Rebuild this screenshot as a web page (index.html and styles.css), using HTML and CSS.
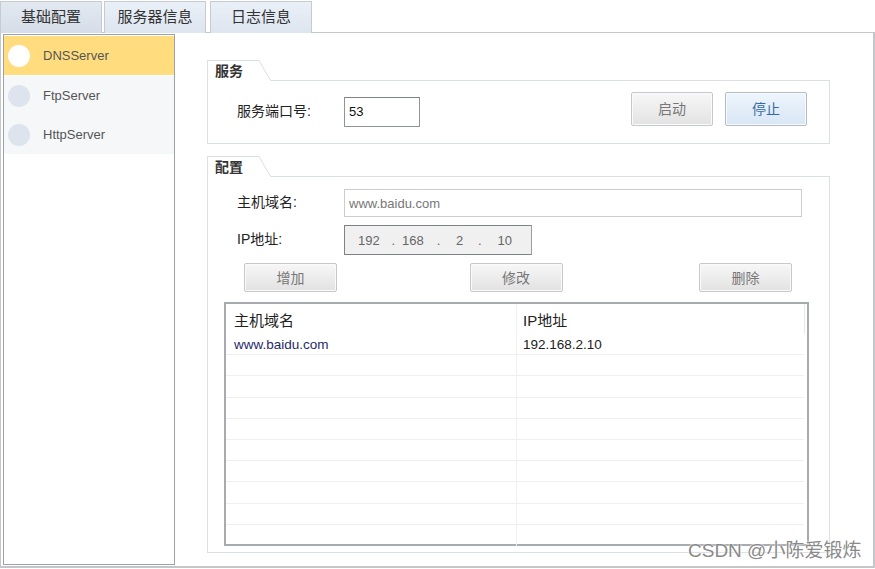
FILE: index.html
```html
<!DOCTYPE html>
<html lang="zh">
<head>
<meta charset="utf-8">
<title>服务器信息</title>
<link rel="stylesheet" href="styles.css">
</head>
<body>
<div class="app">
  <div class="tabs">
    <div class="tab tab-active">基础配置</div>
    <div class="tab">服务器信息</div>
    <div class="tab">日志信息</div>
  </div>
  <div class="frame">
    <div class="sidebar">
      <div class="item item-sel"><span class="dot"></span><span class="item-text">DNSServer</span></div>
      <div class="item"><span class="dot"></span><span class="item-text">FtpServer</span></div>
      <div class="item"><span class="dot"></span><span class="item-text">HttpServer</span></div>
    </div>
    <div class="content">
      <div class="group">
        <div class="ghead">
          <div class="glabel">服务</div>
          <svg class="gslant" width="16" height="21" viewBox="0 0 16 21"><polygon points="0,0 4,0 16,21 0,21" fill="#fff"/><polyline points="0,0.5 4,0.5 15.5,20.5" fill="none" stroke="#dcdfe3" stroke-width="1"/></svg>
        </div>
        <div class="gbox gbox-service">
          <span class="label">服务端口号:</span>
          <div class="input input-port">53</div>
          <div class="spacer"></div>
          <div class="btn btn-start">启动</div>
          <div class="btn btn-stop">停止</div>
        </div>
      </div>
      <div class="group group-config">
        <div class="ghead">
          <div class="glabel">配置</div>
          <svg class="gslant" width="16" height="21" viewBox="0 0 16 21"><polygon points="0,0 4,0 16,21 0,21" fill="#fff"/><polyline points="0,0.5 4,0.5 15.5,20.5" fill="none" stroke="#dcdfe3" stroke-width="1"/></svg>
        </div>
        <div class="gbox gbox-config">
          <div class="row row-host">
            <span class="label">主机域名:</span>
            <div class="input input-host">www.baidu.com</div>
          </div>
          <div class="row row-ip">
            <span class="label">IP地址:</span>
            <div class="ipbox">
              <span class="seg">192</span><span class="sep">.</span>
              <span class="seg">168</span><span class="sep">.</span>
              <span class="seg">2</span><span class="sep">.</span>
              <span class="seg">10</span>
            </div>
          </div>
          <div class="row row-btns">
            <div class="btn btn-op">增加</div>
            <div class="btn btn-op">修改</div>
            <div class="btn btn-op">删除</div>
          </div>
          <div class="table">
            <div class="thead">
              <div class="th th-host">主机域名</div>
              <div class="th th-ip">IP地址</div>
              <div class="th th-end"></div>
            </div>
            <div class="tbody">
              <div class="tr"><div class="td td-host td-link">www.baidu.com</div><div class="td td-ip">192.168.2.10</div></div>
              <div class="tr"><div class="td td-host"></div><div class="td td-ip"></div></div>
              <div class="tr"><div class="td td-host"></div><div class="td td-ip"></div></div>
              <div class="tr"><div class="td td-host"></div><div class="td td-ip"></div></div>
              <div class="tr"><div class="td td-host"></div><div class="td td-ip"></div></div>
              <div class="tr"><div class="td td-host"></div><div class="td td-ip"></div></div>
              <div class="tr"><div class="td td-host"></div><div class="td td-ip"></div></div>
              <div class="tr"><div class="td td-host"></div><div class="td td-ip"></div></div>
              <div class="tr"><div class="td td-host"></div><div class="td td-ip"></div></div>
              <div class="tr tr-last"><div class="td td-host"></div><div class="td td-ip"></div></div>
            </div>
          </div>
        </div>
      </div>
    </div>
  </div>
  <div class="watermark">CSDN @小陈爱锻炼</div>
</div>
</body>
</html>
```

FILE: styles.css
```css
* { box-sizing: border-box; }
html, body { margin: 0; padding: 0; background: #fff; }
body {
  font-family: "Liberation Sans", "Noto Sans CJK SC", sans-serif;
  color: #222;
  width: 875px;
  height: 569px;
  overflow: hidden;
}
.app { position: relative; width: 875px; height: 569px; }

.tabs { display: flex; height: 33px; padding-top: 1px; gap: 2px; }
.tab {
  height: 32px;
  width: 102px;
  border: 1px solid #c6cbd2;
  border-bottom: none;
  background: linear-gradient(#eaf0f7, #dde5ef);
  font-size: 15px;
  color: #333;
  display: flex;
  align-items: center;
  justify-content: center;
  padding-bottom: 4px;
}
.tab:nth-child(3) { margin-left: 2px; }
.tab-active { background: linear-gradient(#e3e9f1, #d5dde8); }

.frame {
  display: flex;
  height: 536px;
  width: 875px;
  border: 1px solid #c4c6c9;
  border-right-width: 2px;
  border-bottom-width: 2px;
  padding: 1px 2px;
  margin-top: -1px;
}
.sidebar {
  width: 172px;
  border: 1px solid #9ea2a8;
  background: #fff;
  padding: 1px 0 0 0;
}
.item {
  height: 39px;
  display: flex;
  align-items: center;
  background: #f6f7f9;
  padding-left: 4px;
}
.item-sel { background: #ffdd7f; height: 39px; margin-bottom: 1px; }
.dot {
  width: 22px;
  height: 22px;
  border-radius: 50%;
  background: #dde4ee;
  margin-right: 13px;
}
.item-sel .dot { background: #fff; }
.item-text { font-size: 13px; color: #555; }

.content { flex: 1; padding: 26px 0 0 32px; }

.group { width: 623px; }
.group-config { margin-top: 12px; }
.ghead { display: flex; height: 21px; margin-bottom: -1px; position: relative; z-index: 1; }
.glabel {
  width: 48px;
  height: 21px;
  background: #fff;
  border-left: 1px solid #dcdfe3;
  border-top: 1px solid #dcdfe3;
  font-size: 14px;
  font-weight: bold;
  color: #333;
  padding: 1px 0 0 7px;
  line-height: 18px;
}
.gslant { display: block; }
.gbox { border: 1px solid #dcdfe3; }
.gbox-service {
  height: 64px;
  display: flex;
  align-items: center;
  padding: 0 22px 7px 29px;
}
.label { font-size: 14px; color: #222; width: 107px; padding-bottom: 5px; }
.gbox-service .label { padding-top: 2px; padding-bottom: 0; }
.input {
  border: 1px solid #8f949a;
  border-top-color: #7d8288;
  background: #fff;
  font-size: 13px;
  display: flex;
  align-items: center;
  padding-left: 4px;
}
.input-port { width: 76px; height: 30px; margin-top: 6px; color: #111; }
.spacer { flex: 1; }
.btn {
  height: 34px;
  width: 82px;
  border: 1px solid #c5c8cc;
  border-radius: 2px;
  background: linear-gradient(#f7f7f7, #e2e2e2);
  box-shadow: inset 0 0 0 1px #fafafa;
  font-size: 14px;
  color: #777;
  display: flex;
  align-items: center;
  justify-content: center;
  padding-bottom: 2px;
}
.btn-start { margin-right: 12px; }
.btn-stop {
  background: linear-gradient(#eef5fc, #d8e6f5);
  border-color: #b1bcc8;
  color: #3569a6;
}

.gbox-config { height: 377px; padding: 12px 20px 0 16px; }
.row { display: flex; align-items: center; }
.row .label { margin-left: 13px; }
.row-host { height: 28px; }
.input-host { width: 458px; height: 28px; color: #777; border-color: #c9ccd0; padding-left: 4px; }
.row-ip { height: 30px; margin-top: 8px; }
.ipbox {
  width: 188px;
  height: 30px;
  background: #f0f0f0;
  border: 1px solid #7e8389;
  border-right-color: #9a9ea3;
  display: flex;
  align-items: center;
  font-size: 13px;
  color: #666;
  padding-left: 13px;
}
.seg { width: 35px; text-align: left; }
.ipbox .seg:nth-child(3) { width: 36px; }
.ipbox .seg:nth-child(5) { width: 26px; text-align: center; }
.ipbox .seg:nth-child(7) { margin-left: 10px; }
.sep { width: 11px; }
.ipbox .sep:nth-child(6) { width: 16px; text-align: center; }
.row-btns { margin-top: 8px; height: 29px; padding-left: 20px; padding-right: 17px; justify-content: space-between; }
.btn-op { width: 93px; height: 29px; }
.btn-op:nth-child(2) { margin-right: 4px; }

.table {
  margin-top: 10px;
  width: 585px;
  height: 244px;
  border: 2px solid #a7abb1;
  border-right-width: 2px;
  background: #fff;
}
.thead { display: flex; height: 30px; }
.th { font-size: 15px; color: #222; display: flex; align-items: center; padding-top: 1px; }
.th-host { width: 291px; padding-left: 8px; border-right: 1px solid #eef0f2; }
.th-ip { width: 288px; padding-left: 6px; border-right: 1px solid #e6e8ea; }
.th-end { flex: 1; }
.tr { display: flex; height: 21.2px; border-bottom: 1px solid #eeeff0; width: 578px; }
.tr-last { border-bottom: none; }
.td { font-size: 13.5px; display: flex; align-items: center; padding-top: 1px; }
.td-host { width: 291px; padding-left: 8px; border-right: 1px solid #eeeff0; }
.td-ip { flex: 1; padding-left: 6px; }
.td-link { color: #1f2a6b; }

.watermark {
  position: absolute;
  left: 688px;
  top: 535px;
  font-size: 19px;
  color: #8a8a8a;
  text-shadow: 0 0 2px #fff, 0 0 2px #fff;
}
```
